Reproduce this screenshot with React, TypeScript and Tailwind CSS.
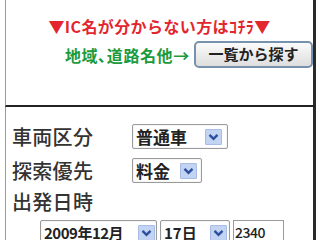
import React from "react";

function Chevron() {
  return (
    <svg width="11" height="8" viewBox="0 0 11 8">
      <path d="M1.5 1.8 L5.5 5.8 L9.5 1.8" fill="none" stroke="#2b4f9e" strokeWidth="2.4" />
    </svg>
  );
}

function Sel({ w, text, gap, tw = "text-[17px]" }: { w: string; text: string; gap: string; tw?: string }) {
  return (
    <div className={`${w} h-[25px] flex items-center justify-between border border-[#9a9a9a] rounded-[2px] bg-white shadow-[inset_0_0_2px_#ddd]`}>
      <span className={`pl-[3px] ${tw} leading-none text-[#222] font-bold`}>{text}</span>
      <div className={`${gap} w-[17px] h-[16px] flex items-center justify-center bg-[#c3d4f3] border border-[#a8bde6] rounded-[1px]`}>
        <Chevron />
      </div>
    </div>
  );
}

export default function App() {
  return (
    <div className="w-[320px] h-[240px] overflow-hidden bg-white font-['Noto_Sans_CJK_JP',sans-serif]">
      <div className="ml-[5px] w-[311px]">
        <div className="h-[107px] border-l border-l-[#9a9a9a] border-r-[3px] border-r-[#2a2a2a] border-b-[2px] border-b-[#222] flex flex-col">
          <div className="pt-[16px] text-center text-[16px] leading-[20px] text-[#e3262e] font-bold tracking-[0.4px] whitespace-nowrap">
            ▼IC名が分からない方はｺﾁﾗ▼
          </div>
          <div className="mt-[5px] flex items-center pl-[59px] whitespace-nowrap">
            <span className="text-[16px] leading-[20px] text-[#1c9a3c] font-bold tracking-[0.6px]">地域､道路名他→</span>
            <div className="ml-[4px] w-[120px] h-[27px] flex items-center justify-center rounded-[5px] border-2 border-[#7792ad] bg-gradient-to-b from-[#fbfbfb] to-[#dedede] text-[15px] text-[#222] font-bold">
              一覧から探す
            </div>
          </div>
        </div>
        <div className="h-[140px] border-l border-l-[#9a9a9a] border-r-[3px] border-r-[#2a2a2a] pl-[6px] pt-[17px] text-[#333]">
          <div className="flex items-center h-[25px]">
            <span className="w-[120px] text-[20px] leading-[24px] font-medium tracking-[0.3px]">車両区分</span>
            <Sel w="w-[96px]" text="普通車" gap="mr-[5px]" />
          </div>
          <div className="mt-[9px] flex items-center h-[25px]">
            <span className="w-[120px] text-[20px] leading-[24px] font-medium tracking-[0.3px]">探索優先</span>
            <Sel w="w-[70px]" text="料金" gap="mr-[4px]" />
          </div>
          <div className="mt-[7px] text-[20px] leading-[24px] font-medium tracking-[0.3px]">出発日時</div>
          <div className="mt-[6px] pl-[28px] flex items-start gap-[3px]">
            <Sel w="w-[117px]" text="2009年12月" gap="mr-[1px]" tw="text-[15px] tracking-[-0.5px]" />
            <Sel w="w-[70px]" text="17日" gap="mr-[2px]" tw="text-[15px]" />
            <div className="w-[51px] h-[25px] border border-[#9a9a9a] bg-white pl-[1px] text-[14px] leading-[22px] tracking-[-0.5px] text-[#222] font-medium">
              2340
            </div>
          </div>
        </div>
      </div>
    </div>
  );
}
